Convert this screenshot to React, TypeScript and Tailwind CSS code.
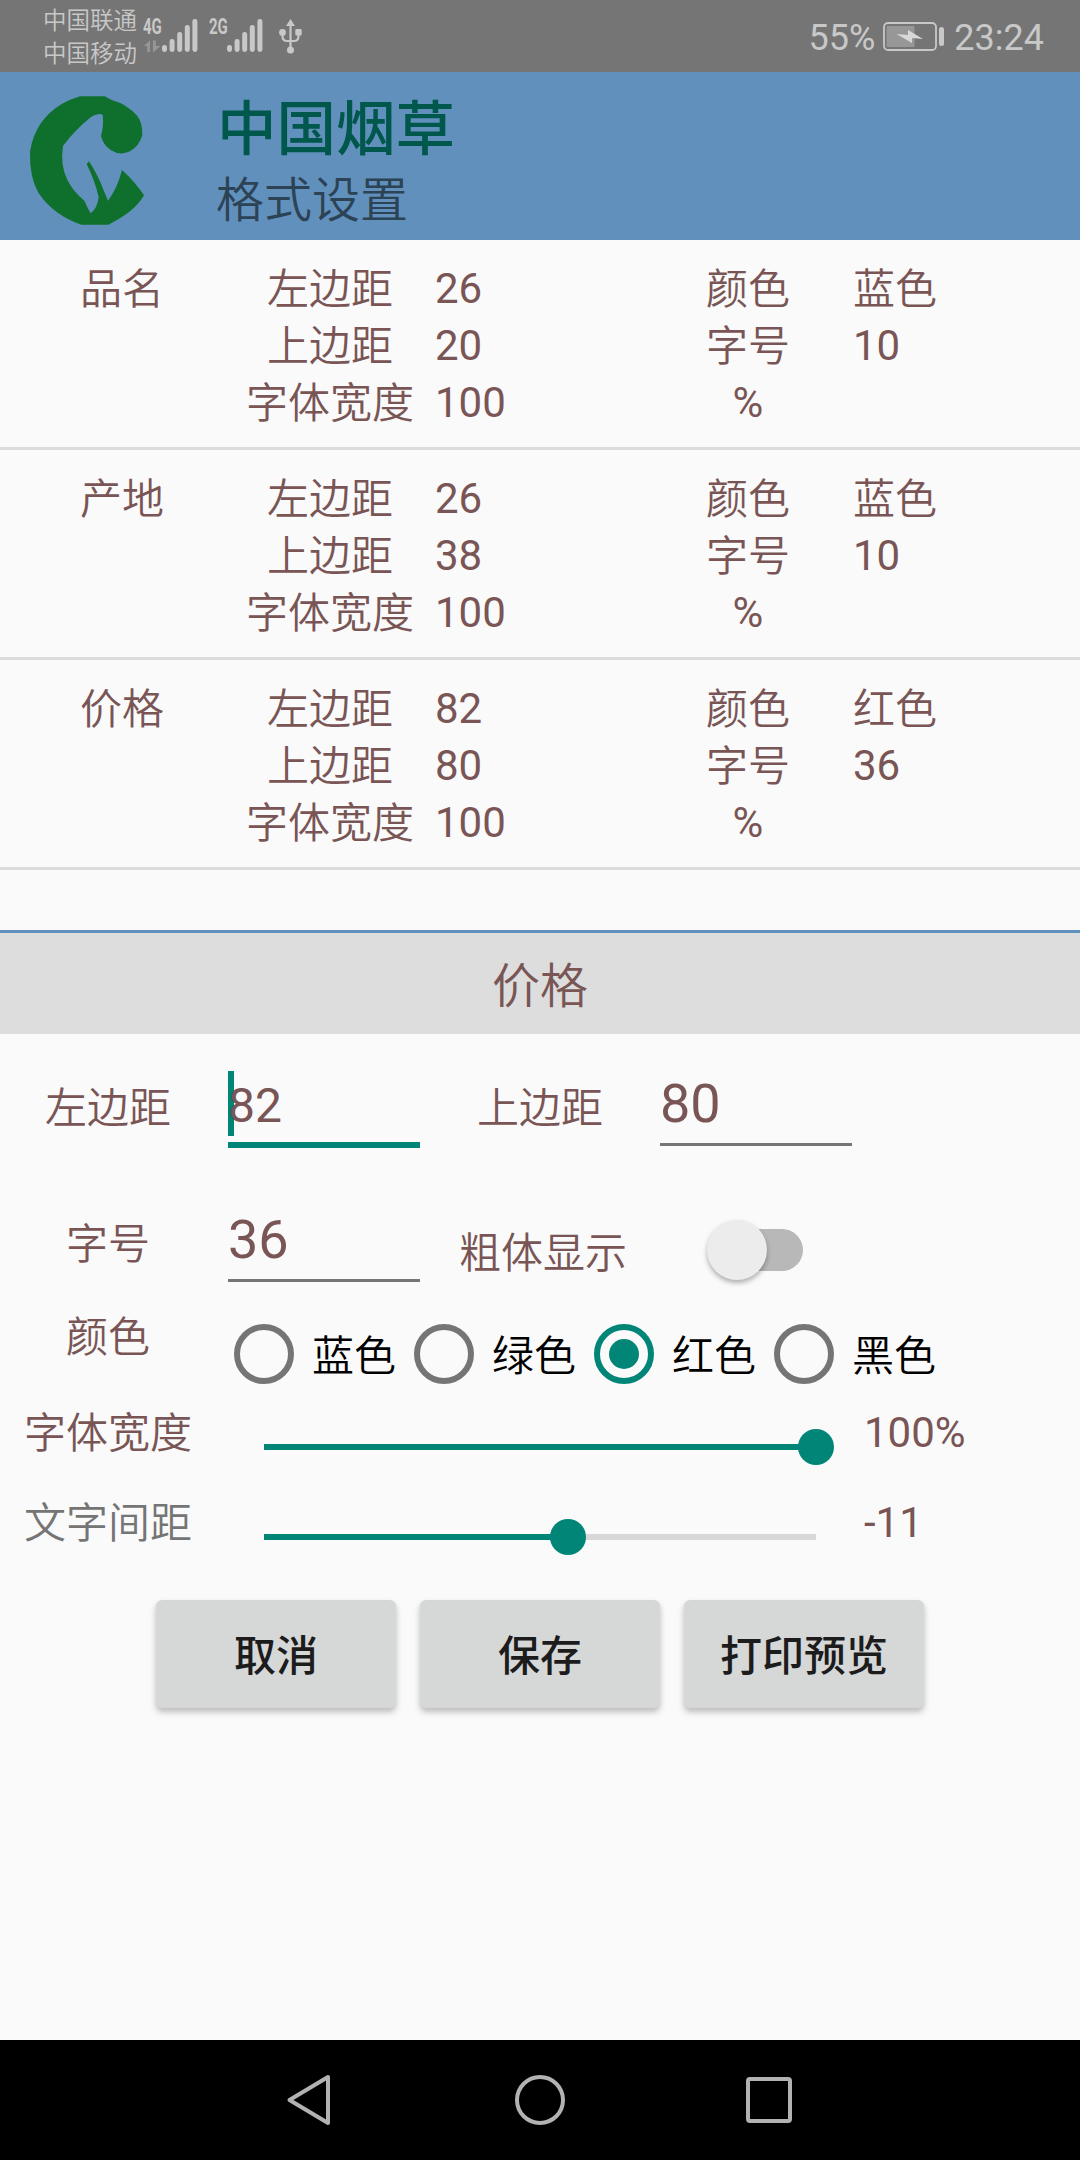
import { useState } from "react";

interface FormatItem {
  name: string;
  left: number;
  top: number;
  width: number;
  color: string;
  size: number;
}

const items: FormatItem[] = [
  { name: "品名", left: 26, top: 20, width: 100, color: "蓝色", size: 10 },
  { name: "产地", left: 26, top: 38, width: 100, color: "蓝色", size: 10 },
  { name: "价格", left: 82, top: 80, width: 100, color: "红色", size: 36 },
];

const colors = ["蓝色", "绿色", "红色", "黑色"];

const SignalBars = () => (
  <svg width="36" height="34" viewBox="0 0 36 34" fill="#c8c8c8">
    <rect x="0" y="26" width="5" height="7" rx="2.4" />
    <rect x="7.6" y="20" width="5" height="13" rx="2.4" />
    <rect x="15.2" y="13" width="5" height="20" rx="2.4" />
    <rect x="22.8" y="6" width="5" height="27" rx="2.4" />
    <rect x="30.4" y="0" width="5" height="33" rx="2.4" />
  </svg>
);

const StatusBar = () => (
  <div className="h-[72px] bg-[#757575] text-[#c8c8c8] flex items-start">
    <div className="ml-[43px] mt-[5px] w-[100px] text-[23.5px] leading-[33px] font-[350]">
      <p>中国联通</p>
      <p>中国移动</p>
    </div>
    <div className="mt-[17px] w-[19px] flex flex-col items-start">
      <span className="text-[22px] leading-[20px] font-bold origin-left scale-x-[0.68]">
        4G
      </span>
      <svg
        className="mt-[3px] ml-[1px]"
        width="17"
        height="13"
        viewBox="0 0 17 13"
        fill="#979797"
      >
        <path d="M0 6 L6 0.5 V12 H3.2 V6 Z" />
        <path d="M9 0.5 H11.8 V6 H16.5 L9 12.5 Z" />
      </svg>
    </div>
    <div className="mt-[19px]">
      <SignalBars />
    </div>
    <span className="mt-[17px] ml-[11px] w-[18px] text-[22px] leading-[20px] font-bold">
      <span className="inline-block origin-left scale-x-[0.68]">2G</span>
    </span>
    <div className="mt-[19px]">
      <SignalBars />
    </div>
    <svg
      className="mt-[19px] ml-[16px]"
      width="24"
      height="35"
      viewBox="0 0 24 35"
      fill="#c8c8c8"
    >
      <path d="M11.5 0 L16 7 H7 Z" />
      <path
        d="M11.5 5 V31 M3.5 14 V17 Q3.5 22 8 22 H15 Q19.5 22 19.5 17 V14"
        fill="none"
        stroke="#c8c8c8"
        strokeWidth="2.2"
      />
      <circle cx="3.5" cy="13.5" r="3.4" />
      <rect x="16.3" y="10" width="6.4" height="6.4" rx="1" />
      <circle cx="11.5" cy="31" r="3.5" />
    </svg>
    <div className="ml-auto mr-[36px] flex items-start text-[36px] leading-[42px]">
      <span className="mt-[17px]">55%</span>
      <svg
        className="mt-[22px] ml-[8px] mr-[9px]"
        width="62"
        height="30"
        viewBox="0 0 62 30"
      >
        <rect
          x="1"
          y="1"
          width="52"
          height="27"
          rx="4"
          fill="none"
          stroke="#c8c8c8"
          strokeWidth="1.8"
        />
        <rect x="3.5" y="4" width="28" height="21" rx="1" fill="#979797" />
        <rect x="56" y="5" width="5" height="19" rx="2.5" fill="#c8c8c8" />
        <path d="M13.5 12 L25 13 V8 L40 17 L29 16 V21 Z" fill="#d8d8d8" />
      </svg>
      <span className="mt-[17px]">23:24</span>
    </div>
  </div>
);

const Header = () => (
  <header className="h-[168px] bg-[#6190bc] flex items-start">
    <svg
      className="ml-[20px] mt-[8px] shrink-0"
      width="140"
      height="160"
      viewBox="0 0 420 480"
    >
      <path
        d="M180 49 H254 L275 60 Q320 72 352 108 Q368 130 367 165 Q358 198 330 214 Q300 228 272 210 Q250 196 243 168 Q252 135 248 104 Q236 98 212 112 Q165 150 129 198 Q120 255 142 300 Q160 335 193 362 Q203 385 212 400 Q232 386 236 352 Q226 305 200 252 L207 244 Q234 285 252 334 L264 362 Q292 325 306 270 Q345 305 372 346 Q345 395 265 434 H184 Q100 405 55 338 Q28 290 30 215 Q45 120 125 72 Q150 58 180 49 Z"
        fill="#0f702d"
      />
    </svg>
    <div className="ml-[56px]">
      <h1 className="mt-[22px] ml-[1px] text-[59.5px] leading-[72px] font-medium text-[#00574b]">
        中国烟草
      </h1>
      <p className="mt-[3px] text-[48px] leading-[64px] font-[350] text-[#2c4355]">
        格式设置
      </p>
    </div>
  </header>
);

const FormatRow = ({ item }: { item: FormatItem }) => (
  <div className="h-[210px] pt-[20px] border-b-[3px] border-[#dcdcdc] flex">
    <div className="w-[225px] pt-[1px] pl-[19px] text-center">{item.name}</div>
    <div className="w-[210px] pt-[1px] text-center">
      <p>左边距</p>
      <p>上边距</p>
      <p>字体宽度</p>
    </div>
    <div className="w-[208px] font-normal">
      <p>{item.left}</p>
      <p>{item.top}</p>
      <p>{item.width}</p>
    </div>
    <div className="w-[210px] pt-[1px] text-center">
      <p>颜色</p>
      <p>字号</p>
      <p className="-mt-[1px] font-normal">%</p>
    </div>
    <div>
      <p className="pt-[1px] -mb-[1px]">{item.color}</p>
      <p className="font-normal">{item.size}</p>
    </div>
  </div>
);

const Slider = ({ value }: { value: number }) => (
  <div className="relative ml-[72px] w-[552px] h-[6px] bg-[#d8d8d8]">
    <div className="h-full bg-[#008577]" style={{ width: `${value}%` }} />
    <div
      className="absolute -top-[15px] -ml-[18px] size-[36px] rounded-full bg-[#008577]"
      style={{ left: `${value}%` }}
    />
  </div>
);

const App = () => {
  const [color, setColor] = useState("红色");
  const [bold, setBold] = useState(false);

  return (
    <main className="w-[1080px] h-[2160px] bg-[#fafafa] flex flex-col overflow-hidden font-['Roboto','Noto_Sans_CJK_SC',sans-serif] text-[42px] leading-[57px] text-[#795555]">
      <StatusBar />
      <Header />
      <section className="h-[690px] font-[350]">
        {items.map((item) => (
          <FormatRow key={item.name} item={item} />
        ))}
      </section>
      <h2 className="h-[104px] pt-[2px] border-t-[3px] border-[#6190bc] bg-[#dddddd] text-center text-[48px] leading-[103px] font-[350]">
        价格
      </h2>

      {/* margins */}
      <div className="h-[136px] pt-[37px] flex items-start">
        <span className="mt-[9px] w-[216px] text-center font-[350]">
          左边距
        </span>
        <div className="relative ml-[12px] w-[192px] h-[77px] border-b-[6px] border-[#008577] text-[48px] leading-[69px]">
          <div className="absolute left-0 top-0 w-[6px] h-[65px] bg-[#008577]" />
          <span className="relative">82</span>
        </div>
        <span className="mt-[9px] w-[240px] text-center font-[350]">
          上边距
        </span>
        <div className="w-[192px] h-[75px] border-b-[3px] border-[#757575] text-[54px] leading-[65px]">
          80
        </div>
      </div>

      {/* font size and bold */}
      <div className="h-[136px] pt-[37px] flex items-start">
        <span className="mt-[9px] w-[216px] text-center font-[350]">
          字号
        </span>
        <div className="ml-[12px] w-[192px] h-[75px] border-b-[3px] border-[#757575] text-[54px] leading-[65px]">
          36
        </div>
        <span className="mt-[18px] ml-[39px] w-[168px] font-[350]">
          粗体显示
        </span>
        <button
          type="button"
          className="relative mt-[22px] ml-[84px] w-[92px] h-[42px] rounded-full bg-[#b8b8b8]"
          onClick={() => setBold(!bold)}
        >
          <span
            className={`absolute -top-[9px] size-[60px] rounded-full bg-[#ececec] shadow-[0_3px_5px_rgba(0,0,0,0.3)] ${
              bold ? "right-0" : "-left-[4px]"
            }`}
          />
        </button>
      </div>

      {/* color */}
      <div className="h-[98px] flex items-start">
        <span className="mt-[3px] w-[216px] text-center font-[350]">颜色</span>
        <div className="mt-[18px] ml-[18px] flex">
          {colors.map((c) => (
            <button
              type="button"
              key={c}
              className="w-[180px] h-[60px] flex items-center text-black font-[350]"
              onClick={() => setColor(c)}
            >
              <span
                className={`size-[60px] shrink-0 rounded-full border-[6px] flex items-center justify-center ${
                  c === color ? "border-[#008577]" : "border-[#757575]"
                }`}
              >
                {c === color && (
                  <span className="size-[30px] rounded-full bg-[#008577]" />
                )}
              </span>
              <span className="ml-[18px] pt-[5px]">{c}</span>
            </button>
          ))}
        </div>
      </div>

      <div className="h-[90px] flex items-start">
        <span className="mt-[1px] ml-[24px] w-[168px] font-[350]">
          字体宽度
        </span>
        <div className="mt-[40px]">
          <Slider value={100} />
        </div>
        <span className="ml-[48px]">100%</span>
      </div>
      <div className="h-[106px] flex items-start">
        <span className="mt-[1px] ml-[24px] w-[168px] font-[350] text-[#757575]">
          文字间距
        </span>
        <div className="mt-[40px]">
          <Slider value={55} />
        </div>
        <span className="ml-[48px]">-11</span>
      </div>

      <div className="flex-1 flex justify-center items-start gap-[24px]">
        {["取消", "保存", "打印预览"].map((text) => (
          <button
            type="button"
            key={text}
            className="w-[240px] h-[108px] pt-[4px] rounded-[6px] bg-[#d6d7d7] text-[#1c1c1c] font-medium shadow-[0_4px_6px_rgba(0,0,0,0.25)]"
          >
            {text}
          </button>
        ))}
      </div>

      <nav className="h-[120px] bg-black flex items-center justify-between pl-[286px] pr-[288px]">
        <svg
          width="46"
          height="52"
          viewBox="0 0 46 52"
          fill="none"
          stroke="#b2b2b2"
          strokeWidth="4"
          strokeLinejoin="round"
        >
          <path d="M42 3 V49 L3.5 26 Z" />
        </svg>
        <div className="ml-[2px] size-[50px] rounded-full border-4 border-[#b2b2b2]" />
        <div className="size-[46px] rounded-[4px] border-4 border-[#b2b2b2]" />
      </nav>
    </main>
  );
};

export default App;
